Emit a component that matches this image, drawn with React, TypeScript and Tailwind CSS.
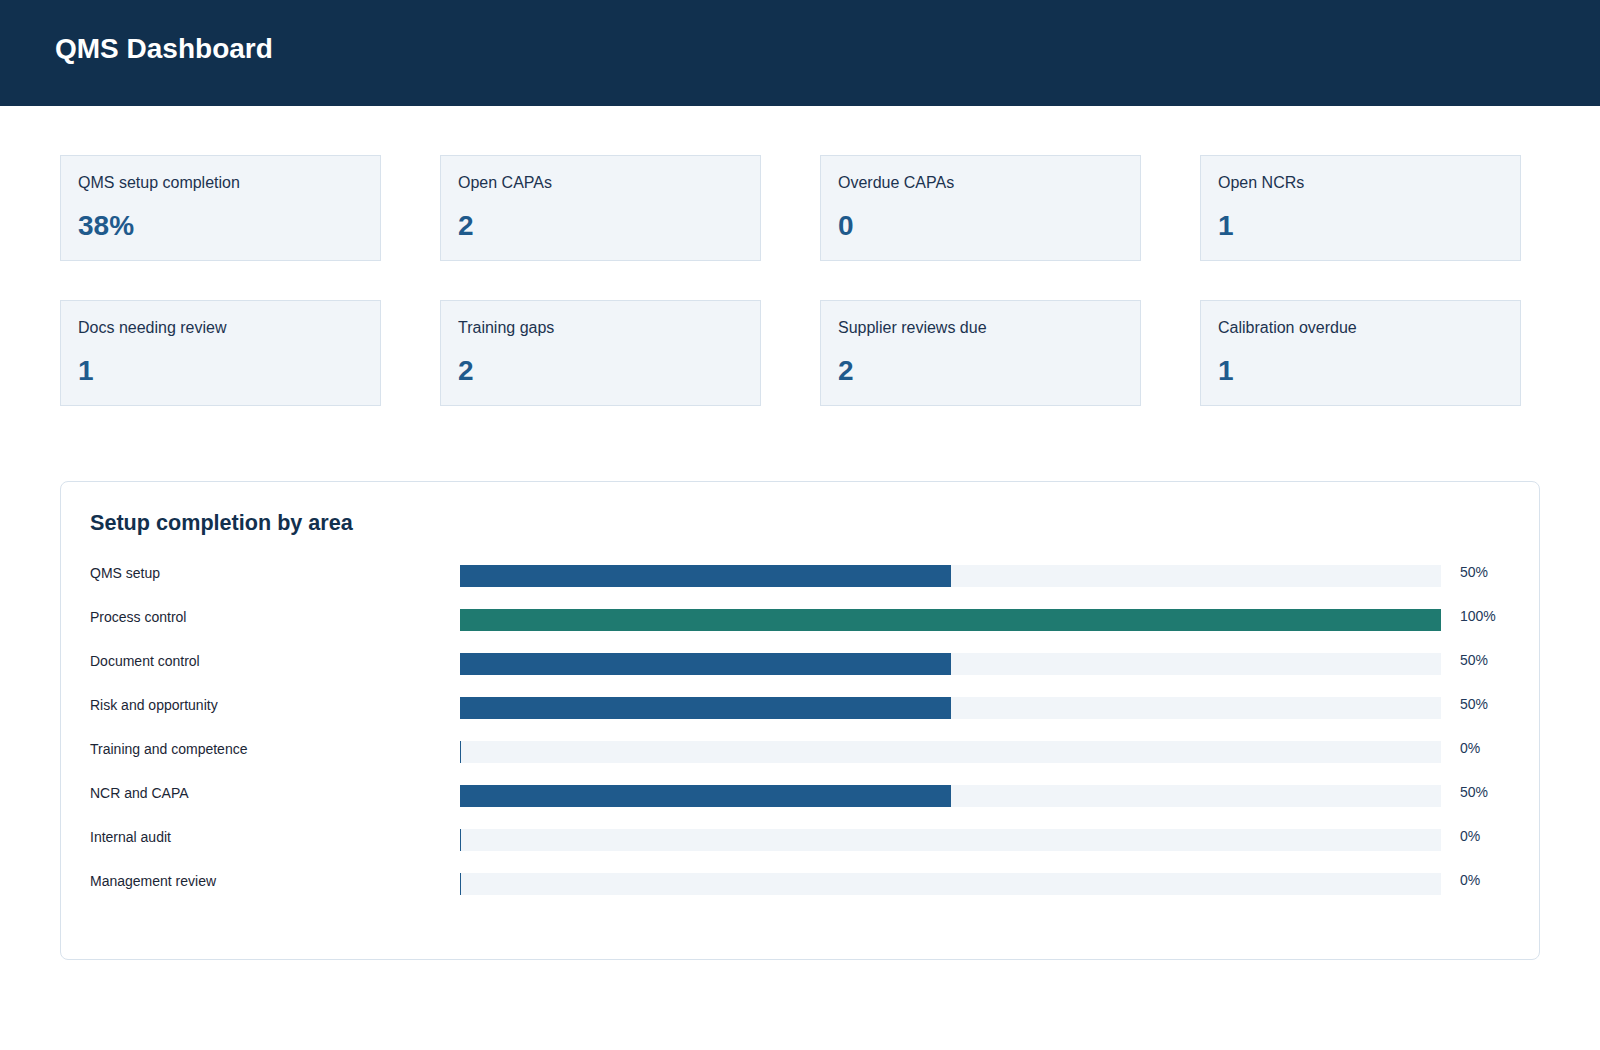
import React from 'react';

type Stat = { label: string; value: string };
type Area = { name: string; pct: number };

const stats: Stat[] = [
  { label: 'QMS setup completion', value: '38%' },
  { label: 'Open CAPAs', value: '2' },
  { label: 'Overdue CAPAs', value: '0' },
  { label: 'Open NCRs', value: '1' },
  { label: 'Docs needing review', value: '1' },
  { label: 'Training gaps', value: '2' },
  { label: 'Supplier reviews due', value: '2' },
  { label: 'Calibration overdue', value: '1' },
];

const areas: Area[] = [
  { name: 'QMS setup', pct: 50 },
  { name: 'Process control', pct: 100 },
  { name: 'Document control', pct: 50 },
  { name: 'Risk and opportunity', pct: 50 },
  { name: 'Training and competence', pct: 0 },
  { name: 'NCR and CAPA', pct: 50 },
  { name: 'Internal audit', pct: 0 },
  { name: 'Management review', pct: 0 },
];

const StatCard: React.FC<Stat> = ({ label, value }) => (
  <div className="w-[321px] h-[106px] bg-[#f1f5f9] border border-[#d8e2ec] px-[17px] pt-[17px]">
    <div className="text-[16px] leading-[20px] text-[#1c3350]">{label}</div>
    <div className="mt-[16px] text-[28px] leading-[34px] font-bold text-[#1f5a8c]">{value}</div>
  </div>
);

const AreaRow: React.FC<Area> = ({ name, pct }) => {
  const full = pct === 100;
  return (
    <div className="grid grid-cols-[351px_1fr_51px] gap-x-[19px] items-start">
      <div className="text-[14px] leading-[16px] text-[#1b2636]">{name}</div>
      <div className="h-[22px] bg-[#f1f5f9]">
        {pct > 0 ? (
          <div
            className={full ? 'h-full bg-[#1f7a70]' : 'h-full bg-[#1f5a8c]'}
            style={{ width: `${pct}%` }}
          />
        ) : (
          <div className="h-full w-px bg-[#1f5a8c]" />
        )}
      </div>
      <div className="text-[14px] leading-[14px] text-[#22395a]">{pct}%</div>
    </div>
  );
};

export default function App() {
  return (
    <div className="min-h-[1050px] bg-white font-['Liberation_Sans',Arial,sans-serif]">
      <header className="h-[106px] bg-[#11304e] px-[55px] pt-[33px]">
        <h1 className="text-[28px] font-bold text-white leading-[32px]">QMS Dashboard</h1>
      </header>

      <main className="px-[60px] pt-[49px]">
        <div className="grid grid-cols-[repeat(4,321px)] gap-x-[59px] gap-y-[39px]">
          {stats.map((s) => (
            <StatCard key={s.label} {...s} />
          ))}
        </div>

        <section className="mt-[75px] border border-[#d8e2ec] rounded-[8px] pl-[29px] pr-[28px] pt-[28px] pb-[64px]">
          <h2 className="text-[21.6px] leading-[25px] font-bold text-[#12304e]">
            Setup completion by area
          </h2>
          <div className="mt-[30px] flex flex-col gap-[22px]">
            {areas.map((a) => (
              <AreaRow key={a.name} {...a} />
            ))}
          </div>
        </section>
      </main>
    </div>
  );
}
